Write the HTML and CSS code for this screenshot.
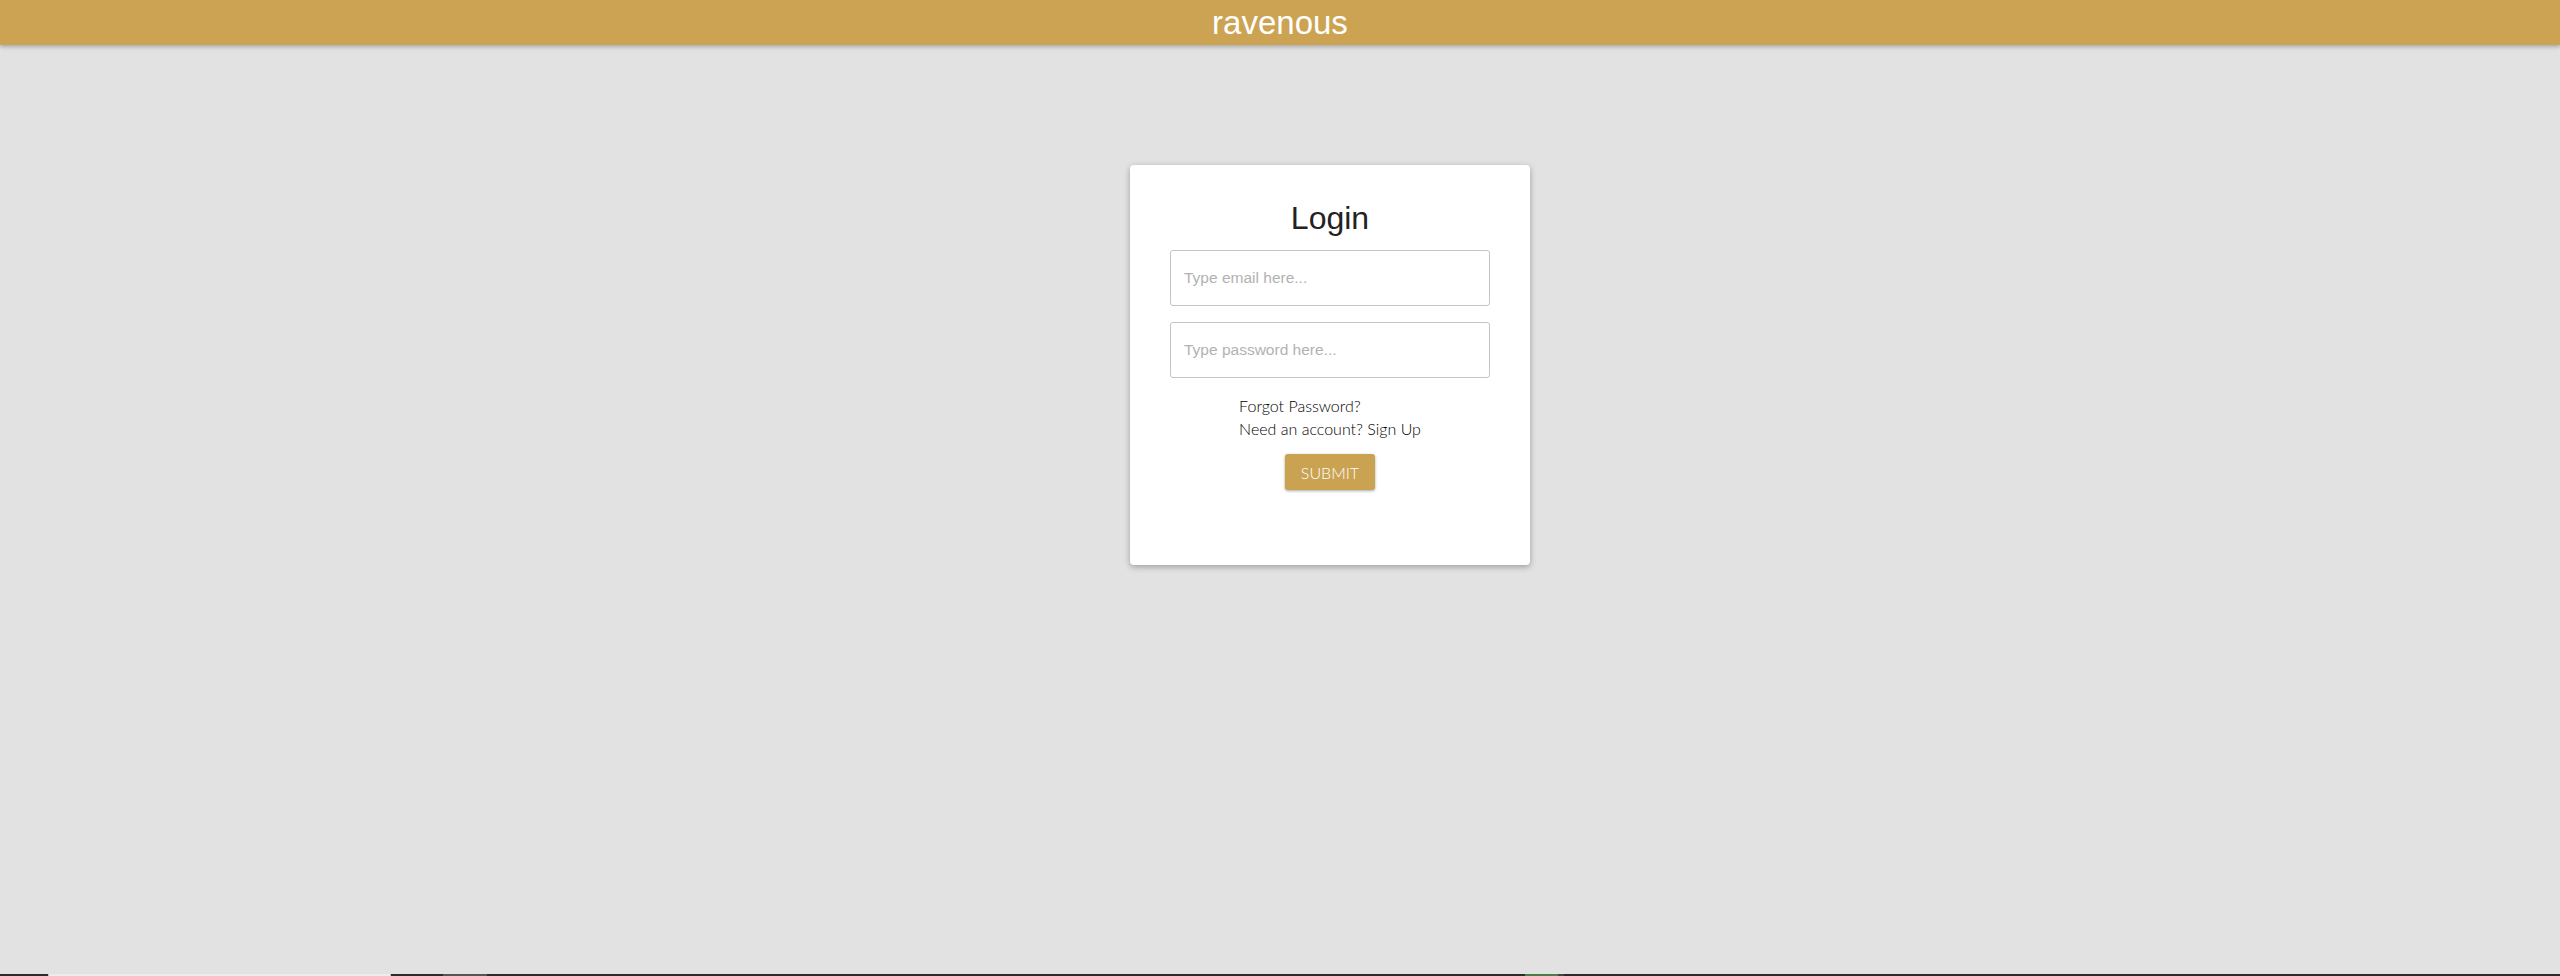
FILE: index.html
```html
<!DOCTYPE html>
<html lang="en">
<head>
<meta charset="utf-8">
<title>ravenous</title>
<link rel="stylesheet" href="styles.css">
</head>
<body>
<header class="topbar">
  <span class="brand">ravenous</span>
</header>
<main class="main">
  <section class="card">
    <h1 class="card-title">Login</h1>
    <form class="login-form">
      <input class="field" type="email" placeholder="Type email here...">
      <input class="field" type="password" placeholder="Type password here...">
      <div class="links">
        <div class="links-inner">
          <div class="link-line">Forgot Password?</div>
          <div class="link-line">Need an account? Sign Up</div>
        </div>
      </div>
      <div class="actions">
        <button class="submit" type="button">Submit</button>
      </div>
    </form>
  </section>
</main>
<footer class="strip">
  <span class="seg seg-dark w48"></span>
  <span class="seg seg-light w343"></span>
  <span class="seg seg-dark w52"></span>
  <span class="seg seg-gray w44"></span>
  <span class="seg seg-dark w1038"></span>
  <span class="seg seg-green w33"></span>
  <span class="seg seg-mid w6"></span>
  <span class="seg seg-dark grow"></span>
</footer>
</body>
</html>
```
FILE: styles.css
```css
html, body {
  margin: 0;
  padding: 0;
}
body {
  background: #e2e2e2;
  height: 100vh;
  display: flex;
  flex-direction: column;
  font-family: "Liberation Sans", Arial, sans-serif;
  overflow: hidden;
}
.topbar {
  height: 45px;
  flex: 0 0 45px;
  background: #cba353;
  display: flex;
  align-items: center;
  justify-content: center;
  box-shadow: 0 2px 4px rgba(0, 0, 0, 0.25);
  position: relative;
  z-index: 1;
}
.brand {
  color: #fff;
  font-family: "Liberation Sans", Arial, sans-serif;
  font-size: 33px;
  line-height: 1;
  margin-top: -1px;
}
.main {
  flex: 1;
  display: flex;
  justify-content: center;
  align-items: flex-start;
  padding-top: 120px;
  padding-left: 100px;
}
.card {
  width: 400px;
  height: 400px;
  box-sizing: border-box;
  background: #fff;
  border-radius: 4px;
  box-shadow: 0 2px 6px rgba(0, 0, 0, 0.3);
  padding: 35px 40px 0;
}
.card-title {
  margin: 0;
  font-family: "Liberation Sans", Arial, sans-serif;
  font-weight: 400;
  font-size: 32px;
  line-height: 37px;
  color: #222;
  text-align: center;
}
.login-form {
  margin-top: 13px;
  display: flex;
  flex-direction: column;
  gap: 16px;
}
.field {
  display: block;
  width: 100%;
  height: 56px;
  box-sizing: border-box;
  border: 1px solid #c4c4c4;
  border-radius: 3px;
  padding: 0 13px;
  font-family: "Liberation Sans", Arial, sans-serif;
  font-size: 15.5px;
  color: #333;
  outline: none;
  background: #fff;
}
.field::placeholder {
  color: #b2b2b2;
}
.links {
  display: flex;
  justify-content: center;
}
.links-inner {
  font-family: Lato, "Open Sans", sans-serif;
  font-weight: 300;
  font-size: 16px;
  line-height: 23px;
  color: #000;
  text-align: left;
}
.actions {
  display: flex;
  justify-content: center;
  margin-top: -2px;
}
.submit {
  width: 90px;
  height: 36px;
  border: none;
  border-radius: 3px;
  background: #c9a252;
  color: #fff;
  font-family: Lato, "Liberation Sans", Arial, sans-serif;
  font-weight: 300;
  font-size: 16px;
  text-transform: uppercase;
  box-shadow: 0 1px 3px rgba(0, 0, 0, 0.35);
  padding: 0;
  cursor: pointer;
}
.strip {
  flex: 0 0 2px;
  height: 2px;
  display: flex;
}
.seg { display: block; height: 2px; flex: 0 0 auto; }
.seg-dark { background: #2b2b2b; }
.seg-light { background: #ececec; border-left: 1px solid #bdbdbd; border-right: 1px solid #bdbdbd; box-sizing: border-box; }
.seg-gray { background: #555; }
.seg-green { background: #4b7d46; }
.seg-mid { background: #444; }
.w48 { width: 48px; }
.w343 { width: 343px; }
.w52 { width: 52px; }
.w44 { width: 44px; }
.w1038 { width: 1038px; }
.w33 { width: 33px; }
.w6 { width: 6px; }
.grow { flex: 1 1 auto; }
```
